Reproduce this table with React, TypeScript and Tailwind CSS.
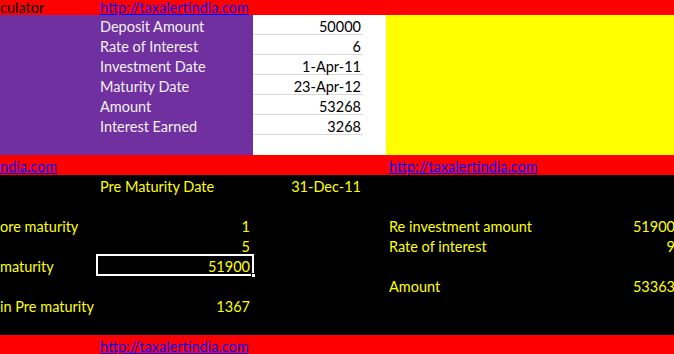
const link = "http://taxalertindia.com";

const topRows = [
  { label: "Deposit Amount", value: "50000" },
  { label: "Rate of Interest", value: "6" },
  { label: "Investment Date", value: "1-Apr-11" },
  { label: "Maturity Date", value: "23-Apr-12" },
  { label: "Amount", value: "53268" },
  { label: "Interest Earned", value: "3268" },
];

type BottomRow = {
  a?: string;
  b?: string;
  bValue?: string;
  c?: string;
  e?: string;
  f?: string;
  selected?: boolean;
};

const bottomRows: BottomRow[] = [
  { b: "Pre Maturity Date", c: "31-Dec-11" },
  {},
  { a: "ore maturity", bValue: "1", e: "Re investment amount", f: "51900" },
  { bValue: "5", e: "Rate of interest", f: "9" },
  { a: "maturity", bValue: "51900", selected: true },
  { e: "Amount", f: "53363" },
  { a: "in Pre maturity", bValue: "1367" },
  {},
];

function Link({ children }: { children: string }) {
  return <span className="text-[#0000ff] underline whitespace-nowrap">{children}</span>;
}

export default function App() {
  return (
    <div
      className="w-[674px] h-[354px] overflow-hidden bg-white text-[14.5px]"
      style={{ fontFamily: "Lato, 'Liberation Sans', sans-serif" }}
    >
      {/* row 1 */}
      <div className="flex h-[15px] bg-[#ff0000] leading-[15px]">
        <div className="w-[97px] overflow-hidden whitespace-nowrap text-black">culator</div>
        <div className="pl-[3px]">
          <Link>{link}</Link>
        </div>
      </div>

      {/* input block */}
      <div className="flex h-[140px]">
        <div className="flex w-[253px] bg-[#7030a0]">
          <div className="w-[97px]" />
          <div className="flex flex-col pl-[3px] text-[#f2f2f2]">
            {topRows.map((r) => (
              <div key={r.label} className="h-[20px] leading-[24px] whitespace-nowrap">
                {r.label}
              </div>
            ))}
          </div>
        </div>
        <div className="w-[133px] bg-white">
          <div className="flex w-[110px] flex-col text-black">
            {topRows.map((r) => (
              <div
                key={r.label}
                className="h-[20px] border-b border-[#d9d9d9] pr-[2px] text-right leading-[24px]"
              >
                {r.value}
              </div>
            ))}
          </div>
        </div>
        <div className="flex-1 bg-[#ffff00]" />
      </div>

      {/* link row */}
      <div className="flex h-[20px] bg-[#ff0000] leading-[24px]">
        <div className="w-[386px] overflow-hidden">
          <Link>ndia.com</Link>
        </div>
        <div className="pl-[3px]">
          <Link>{link}</Link>
        </div>
      </div>

      {/* pre maturity block */}
      <div className="flex flex-col bg-black text-[#ffff00]">
        {bottomRows.map((r, i) => (
          <div key={i} className="flex h-[20px] leading-[24px] whitespace-nowrap">
            <div className="w-[97px] overflow-hidden">{r.a}</div>
            <div className="relative w-[156px] pl-[3px]">
              {r.b}
              {r.bValue && <div className="absolute inset-0 pr-[3px] text-right">{r.bValue}</div>}
              {r.selected && (
                <>
                  <div className="absolute -left-[1px] -top-[1px] h-[22px] w-[158px] border-2 border-white" />
                  <div className="absolute -bottom-[3px] -right-[3px] h-[5px] w-[5px] border border-black bg-white" />
                </>
              )}
            </div>
            <div className="w-[110px] pr-[2px] text-right">{r.c}</div>
            <div className="w-[23px]" />
            <div className="w-[150px] pl-[3px]">{r.e}</div>
            <div className="flex-1 -mr-[1px] text-right">{r.f}</div>
          </div>
        ))}
      </div>

      {/* bottom link row */}
      <div className="flex h-[20px] bg-[#ff0000] leading-[24px]">
        <div className="w-[97px]" />
        <div className="pl-[3px]">
          <Link>{link}</Link>
        </div>
      </div>
    </div>
  );
}
